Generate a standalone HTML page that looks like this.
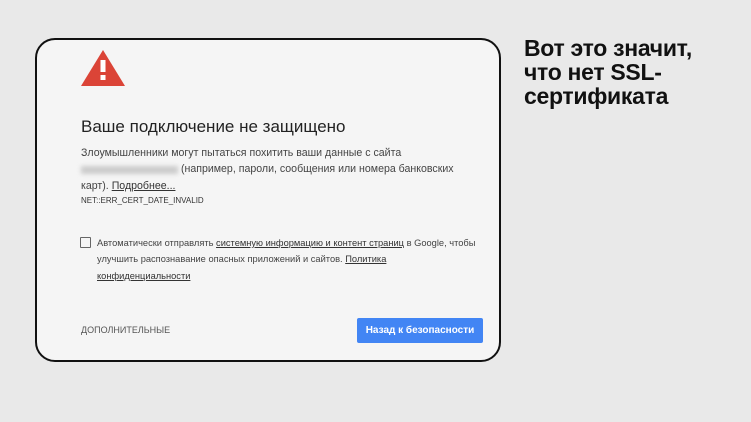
<!DOCTYPE html>
<html><head><meta charset="utf-8"><style>
*{margin:0;padding:0;box-sizing:border-box}
body{width:751px;height:422px;background:#e9e9e9;position:relative;overflow:hidden;font-family:"Liberation Sans","DejaVu Sans",sans-serif}
.card{position:absolute;left:35px;top:38px;width:466px;height:324px;border:2px solid #111;border-radius:20px;background:#f5f5f5}
.a{position:absolute;color:#333;white-space:nowrap}
.t{font-size:10.6px;line-height:16.3px;color:#444}
.t2{font-size:9.3px;line-height:16.3px;color:#444}
u{text-decoration:underline;color:#333}
.h{position:absolute;left:524px;top:36px;font-size:23px;line-height:24px;font-weight:bold;color:#111;letter-spacing:-0.3px}
.btn{position:absolute;left:357px;top:318px;width:126px;height:25px;background:#4285f4;color:#fff;font-size:10px;font-weight:bold;text-align:center;line-height:25px;border-radius:2px}
.blur{display:inline-block;width:97px;height:8px;background:#ccc;filter:blur(2px);vertical-align:middle}
</style></head><body>
<div class="card"></div>
<svg style="position:absolute;left:80px;top:49px" width="46" height="38" viewBox="0 0 46 38"><polygon points="23,1 45,37 1,37" fill="#db4437"/><rect x="20.5" y="11" width="5" height="12" fill="#fff"/><rect x="20.5" y="26" width="5" height="5" fill="#fff"/></svg>
<div class="a" style="left:81px;top:117px;font-size:17px;color:#222">Ваше подключение не защищено</div>
<div class="a t" style="left:81px;top:145px">Злоумышленники могут пытаться похитить ваши данные с сайта<br><span class="blur"></span> (например, пароли, сообщения или номера банковских<br>карт). <u>Подробнее...</u></div>
<div class="a" style="left:81px;top:196px;font-size:8px;color:#333">NET::ERR_CERT_DATE_INVALID</div>
<div style="position:absolute;left:80px;top:237px;width:11px;height:11px;border:1px solid #666;border-radius:1px"></div>
<div class="a t2" style="left:97px;top:235px">Автоматически отправлять <u>системную информацию и контент страниц</u> в Google, чтобы<br>улучшить распознавание опасных приложений и сайтов. <u>Политика</u><br><u>конфиденциальности</u></div>
<div class="a" style="left:81px;top:325px;font-size:9px;color:#555">ДОПОЛНИТЕЛЬНЫЕ</div>
<div class="btn">Назад к безопасности</div>
<div class="h">Вот это значит,<br>что нет SSL-<br>сертификата</div>
</body></html>
